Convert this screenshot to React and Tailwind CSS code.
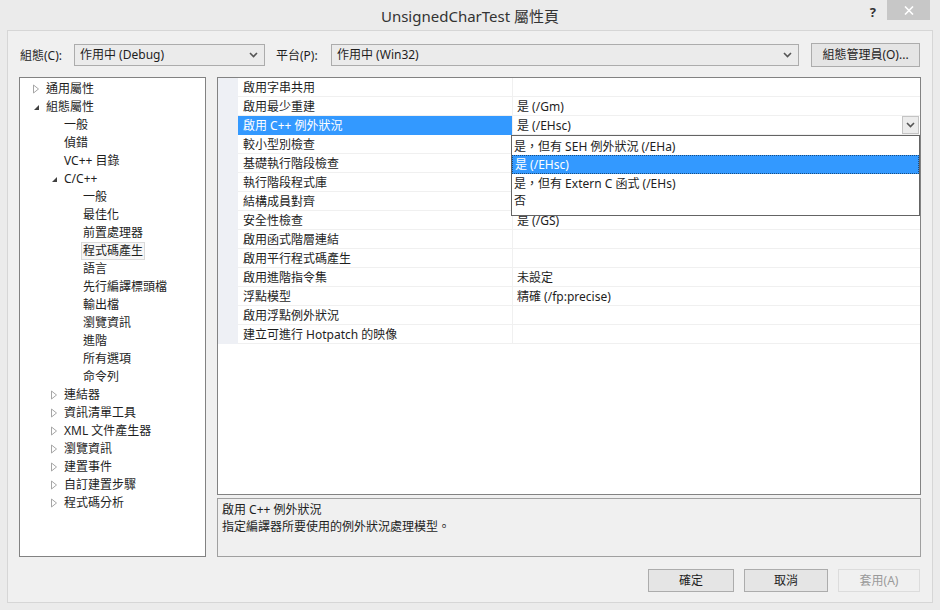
import React from 'react';

const font = { fontFamily: '"Noto Sans", "Noto Sans CJK TC", sans-serif' };

const tree = [
  { t: '通用屬性', l: 0, a: 'c' },
  { t: '組態屬性', l: 0, a: 'e' },
  { t: '一般', l: 1 },
  { t: '偵錯', l: 1 },
  { t: 'VC++ 目錄', l: 1 },
  { t: 'C/C++', l: 1, a: 'e' },
  { t: '一般', l: 2 },
  { t: '最佳化', l: 2 },
  { t: '前置處理器', l: 2 },
  { t: '程式碼產生', l: 2, sel: true },
  { t: '語言', l: 2 },
  { t: '先行編譯標頭檔', l: 2 },
  { t: '輸出檔', l: 2 },
  { t: '瀏覽資訊', l: 2 },
  { t: '進階', l: 2 },
  { t: '所有選項', l: 2 },
  { t: '命令列', l: 2 },
  { t: '連結器', l: 1, a: 'c' },
  { t: '資訊清單工具', l: 1, a: 'c' },
  { t: 'XML 文件產生器', l: 1, a: 'c' },
  { t: '瀏覽資訊', l: 1, a: 'c' },
  { t: '建置事件', l: 1, a: 'c' },
  { t: '自訂建置步驟', l: 1, a: 'c' },
  { t: '程式碼分析', l: 1, a: 'c' },
];

const rows = [
  ['啟用字串共用', ''],
  ['啟用最少重建', '是 (/Gm)'],
  ['啟用 C++ 例外狀況', '是 (/EHsc)', true],
  ['較小型別檢查', ''],
  ['基礎執行階段檢查', ''],
  ['執行階段程式庫', ''],
  ['結構成員對齊', ''],
  ['安全性檢查', '是 (/GS)'],
  ['啟用函式階層連結', ''],
  ['啟用平行程式碼產生', ''],
  ['啟用進階指令集', '未設定'],
  ['浮點模型', '精確 (/fp:precise)'],
  ['啟用浮點例外狀況', ''],
  ['建立可進行 Hotpatch 的映像', ''],
];

const indent = ['pl-[12px]', 'pl-[30px]', 'pl-[49px]'];

const Chevron = ({ className = '' }) => (
  <svg width="9" height="6" viewBox="0 0 9 6" className={className}>
    <path d="M1 1 L4.5 4.5 L8 1" fill="none" stroke="#555" strokeWidth="1.6" />
  </svg>
);

const Arrow = ({ type }) =>
  type === 'c' ? (
    <svg width="8" height="10" viewBox="0 0 8 10">
      <path d="M1.5 1 L6.5 5 L1.5 9 Z" fill="none" stroke="#a6a6a6" strokeWidth="1" />
    </svg>
  ) : type === 'e' ? (
    <svg width="8" height="10" viewBox="0 0 8 10">
      <path d="M7 3 L7 8 L2 8 Z" fill="#404040" />
    </svg>
  ) : (
    <span className="w-[8px]" />
  );

const Select = ({ text, className }) => (
  <div
    className={`h-[22px] flex items-center justify-between border border-[#acacac] bg-[#ebebeb] pl-[5px] pr-[6px] ${className}`}
  >
    <span>{text}</span>
    <Chevron />
  </div>
);

const Button = ({ children, disabled, w }) => (
  <div
    className={`${w} h-[23px] flex items-center justify-center border ${
      disabled ? 'border-[#dcdcdc] text-[#9a9a9a] bg-[#f0f0f0]' : 'border-[#acacac] bg-[#e5e5e5]'
    }`}
  >
    {children}
  </div>
);

export default function App() {
  return (
    <div className="w-[940px] h-[610px] bg-[#ebebeb] flex flex-col text-[12px] text-[#1e1e1e]" style={font}>
      <div className="h-[30px] grid grid-cols-[1fr_auto_1fr] items-start">
        <div />
        <div className="text-[15px] text-[#333] pt-[5px]">UnsignedCharTest 屬性頁</div>
        <div className="flex justify-end items-start pr-[10px]">
          <span className="mt-[3px] mr-[11px] text-[13px] font-bold text-[#333]">?</span>
          <div className="w-[43px] h-[20px] bg-[#c7c7c7] flex items-center justify-center">
            <svg width="10" height="9" viewBox="0 0 10 9">
              <path d="M1 0.5 L9 8.5 M9 0.5 L1 8.5" stroke="#fff" strokeWidth="1.6" />
            </svg>
          </div>
        </div>
      </div>

      <div className="flex-1 mx-[7px] mb-[7px] border border-[#d6d6d6] bg-[#f0f0f0] flex flex-col px-[11px] pt-[12px] pb-[10px]">
        <div className="flex items-center h-[24px]">
          <span className="w-[55px] pl-[1px] pt-[1px]">組態(C):</span>
          <Select text="作用中 (Debug)" className="w-[191px]" />
          <span className="ml-[11px] w-[55px] pt-[1px]">平台(P):</span>
          <Select text="作用中 (Win32)" className="w-[468px]" />
          <div className="ml-[12px] w-[109px] h-[24px] flex items-center justify-center border border-[#acacac] bg-[#e5e5e5]">
            組態管理員(O)...
          </div>
        </div>

        <div className="flex mt-[10px] h-[480px]">
          <div className="w-[187px] h-full bg-white border border-[#828282] pt-[2px]">
            {tree.map((n, i) => (
              <div key={i} className={`h-[18px] flex items-center ${indent[n.l]}`}>
                <span className="w-[12px] flex items-center">
                  <Arrow type={n.a} />
                </span>
                <span
                  className={`leading-[16px] px-[1px] border ${
                    n.sel ? 'border-[#dadada] bg-[#f7f7f7]' : 'border-transparent'
                  }`}
                >
                  {n.t}
                </span>
              </div>
            ))}
          </div>

          <div className="ml-[11px] flex-1 flex flex-col">
            <div className="relative h-[418px] bg-white border border-[#828282]">
              {rows.map(([k, v, sel], i) => (
                <div key={i} className="h-[19px] flex">
                  <div className="w-[20px] bg-[#eef0f5]" />
                  <div
                    className={`w-[274px] flex items-center pl-[5px] pt-[2px] border-b ${
                      sel ? 'bg-[#3399ff] text-white border-[#3399ff]' : 'border-[#f0f0f0]'
                    }`}
                  >
                    {k}
                  </div>
                  <div className="flex-1 flex items-center justify-between pl-[4px] border-l border-b border-[#f0f0f0]">
                    <span className="pt-[2px]">{v}</span>
                    {sel && (
                      <div className="w-[17px] h-[18px] mr-[1px] border border-[#c4c4c4] bg-[#ececec] flex items-center justify-center">
                        <Chevron />
                      </div>
                    )}
                  </div>
                </div>
              ))}

              <div className="absolute left-[293px] top-[57px] w-[409px] h-[81px] bg-white border border-[#646464] pt-[1px]">
                <div className="h-[18px] flex items-center pl-[2px] pt-[1px]">是，但有 SEH 例外狀況 (/EHa)</div>
                <div className="h-[19px] flex items-center pl-[2px] bg-[#3399ff] text-white border border-dotted border-[#1a4d80]">
                  是 (/EHsc)
                </div>
                <div className="h-[18px] flex items-center pl-[2px] pt-[1px]">是，但有 Extern C 函式 (/EHs)</div>
                <div className="h-[18px] flex items-center pl-[2px]">否</div>
              </div>
            </div>

            <div className="mt-[3px] flex-1 border border-[#a0a0a0] bg-[#f0f0f0] pl-[4px] pt-[2px] leading-[17px]">
              <div>啟用 C++ 例外狀況</div>
              <div>指定編譯器所要使用的例外狀況處理模型。</div>
            </div>
          </div>
        </div>

        <div className="flex justify-end gap-[10px] mt-[12px] pr-[1px]">
          <Button w="w-[86px]">確定</Button>
          <Button w="w-[84px]">取消</Button>
          <Button w="w-[82px]" disabled>套用(A)</Button>
        </div>
      </div>
    </div>
  );
}
